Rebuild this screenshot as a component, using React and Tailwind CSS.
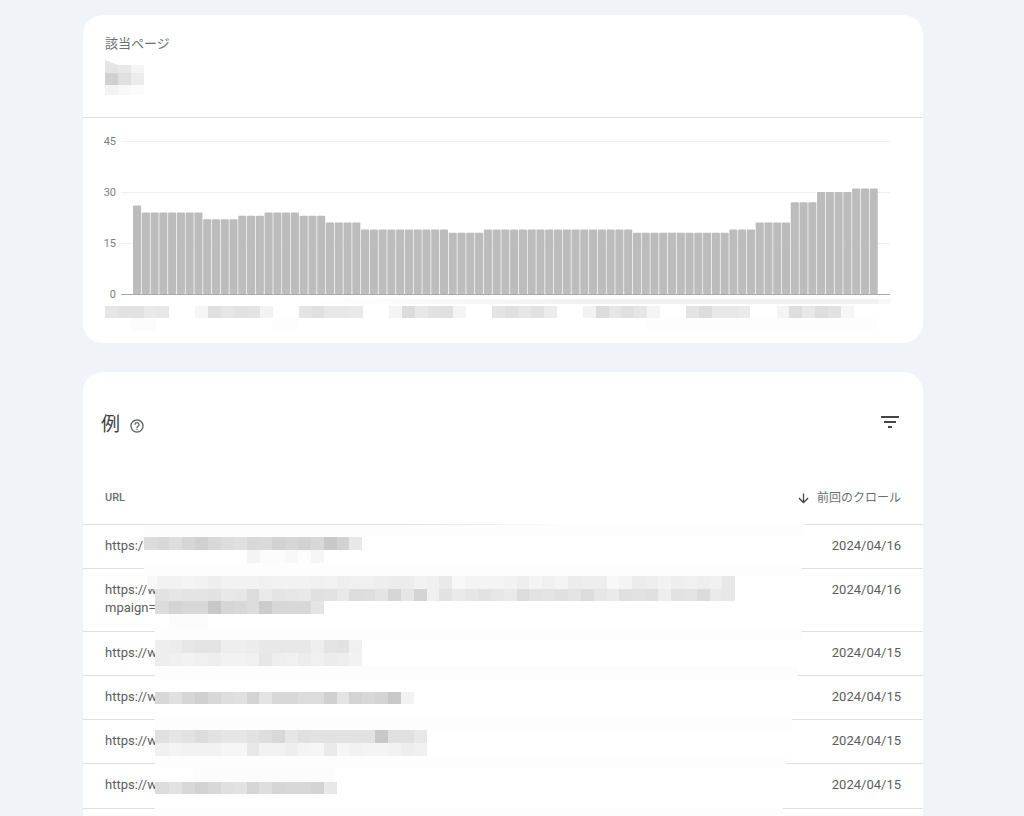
const FONT = "font-['Roboto','Noto_Sans_CJK_JP',sans-serif]";
const CELL = 12.87;

const runs = [[26,1],[24,7],[22,4],[23,3],[24,4],[23,3],[21,4],[19,10],[18,4],[19,17],[18,11],[19,3],[21,4],[27,3],[30,4],[31,3]];
const bars = runs.flatMap(([v, n]) => Array(n).fill(v));

/* One strip of the pixelated redaction: "e2" is a cell, "e2*3" a cell three wide, "--" a gap. */
function Strip({ cells = "", h = CELL }) {
  const list = cells ? cells.split(" ") : [];
  return (
    <div className="flex shrink-0" style={{ height: h }}>
      {list.map((token, i) => {
        const [c, n = "1"] = token.split("*");
        return (
          <div
            key={i}
            className="h-full shrink-0"
            style={{ width: CELL * Number(n), background: c === "--" ? "transparent" : `#${c}${c}${c}` }}
          />
        );
      })}
    </div>
  );
}

const TABLE_MASK = [
  ["fd*51.3", 12.2],
  ["dc d8 de d6 d0 d8 dd e0 d8 da d2 d6 d2 d8 c8 d2 e8"],
  ["--*8 f4 fc fc f8 fc f6"],
  ["fd*51.1"],
  ["--*0.256 f8*0.744 f2 f2 f4 f2 ee f2 f2 f2 f0 f2 f2 f2 f0 f2 ee f0 f0 ee ec ec f2 f0 ea f8 f4 f4 f4 f2 ee f4 f0 f4 ec ee ee f8 f4 ec ee f2 ee f0 ee f0 e8"],
  ["--*0.876 e2*1.124 e6 e4 e4 e2 e8 e6 dc ea e4 e6 e8 e0 e2 e8 dc de e4 d6 e6 d4 f0 e2 ea e6 e2 e6 ea dc e2 e4 e0 e4 dc e6 ea e0 e2 e0 ee e2 e4 dc ea e8"],
  ["--*0.876 dc*1.124 d4 d8 d8 c8 d6 d8 dc cc d8 d8 d8 e4"],
  ["--*2 fc*3"],
  ["--*0.876 fd*50.2"],
  ["--*0.876 ee*1.124 ec e6 e4 e4 ee ee ec e8 e8 e8 e8 ee e4 e2 f0"],
  ["--*0.876 ee*1.124 f0 f2 f0 ee f2 f2 f0 e6 ee f0 ec f0 ec ee f2"],
  ["--*0.876 fd*49.96"],
  ["--*0.876 ff*1"],
  ["--*0.876 d8*1.124 e0 d6 d0 d8 de e0 d4 e4 d8 d8 dc dc d0 e4 d4 d8 d4 c8 f2"],
  [""],
  ["--*0.876 fd*49.5"],
  ["--*0.876 e0*1.124 e6 e2 dc e2 e6 e6 e2 de d8 e6 e0 e2 e2 e2 e2 e2 c8 e0 e0 e8"],
  ["--*0.876 f0*1.124 f4 f2 f2 f2 f6 f6 e8 f2 f2 ee f4 f6 ea f6 f2 f4 f4 f2 ee f0"],
  ["--*0.876 fd*49.03"],
  ["--*0.876 ff*3 fc*11"],
  ["--*0.876 dc*1.124 e2 d8 d2 d8 e0 e2 d6 de d6 d8 d8 d4 e8"],
  [""],
  ["--*0.876 fd*48.8"],
];

function Chart() {
  const y0 = 176;
  const top = (v) => y0 - v * 3.4;
  return (
    <svg width="840" height="184" className="mb-[-3px] block" style={{ fontFamily: "Roboto, sans-serif" }}>
      {[45, 30, 15].map((v) => (
        <line key={v} x1="38" x2="807" y1={top(v) + 0.5} y2={top(v) + 0.5} stroke="#f0f0f0" />
      ))}
      {bars.map((v, i) => (
        <rect key={i} x={50 + i * 8.77} y={top(v)} width="8.1" height={v * 3.4} rx="1" fill="#bcbcbc" />
      ))}
      <line x1="38" x2="807" y1={y0 + 0.5} y2={y0 + 0.5} stroke="#a8a8a8" />
      {[45, 30, 15, 0].map((v) => (
        <text key={v} x="33" y={top(v) + 4} textAnchor="end" fontSize="11" fill="#808080">{v}</text>
      ))}
    </svg>
  );
}

function Row({ h, lines, date }) {
  return (
    <div className={`flex justify-between border-b border-[#e0e0e0] pl-[22px] pr-[22px] pt-[12px] text-[13px] leading-[18px] text-[#5a5d60] ${h}`}>
      <div className="whitespace-nowrap">
        {lines.map((l) => <div key={l}>{l}</div>)}
      </div>
      <div>{date}</div>
    </div>
  );
}

export default function App() {
  return (
    <div className={`relative h-[816px] overflow-hidden bg-[#f0f4f9] pl-[83px] pt-[15px] ${FONT}`}>
      <section className="h-[328px] w-[840px] rounded-[20px] bg-white">
        <div className="h-[103px] border-b border-[#e0e0e0] pl-[22px] pt-[20px]">
          <div className="text-[13px] leading-[18px] text-[#6b6f73]">該当ページ</div>
          <div className="mt-[7px] h-[5px] w-[13px] bg-[#e6e6e6] [clip-path:polygon(0_0,100%_100%,0_100%)]" />
          <Strip cells="e4 e8 f4" h={7.5} />
          <Strip cells="d0 e0 ec" />
          <Strip cells="f2 f8 fc" h={10} />
        </div>
        <Chart />
        <div className="ml-[217px] flex h-[5px]">
          <div className="w-[578px] bg-gradient-to-r from-white via-[#f1f1f1] to-[#f1f1f1]" />
          <div className="w-[13px] bg-[#f8f8f8]" />
        </div>
        <div className="ml-[22px] mt-[2px]">
          <Strip cells="e6 e2 e2 ea e8 --*2.03 f6 e0 e6 e2 e4 f2 --*2.03 e4 e0 e8 e8 ea --*2.03 f4 dc e8 e2 e0 f4 --*2.03 e4 e0 e6 e2 ec --*2.03 f2 dc e6 e0 e6 f4 --*2.03 e4 dc e8 e8 ea --*2.03 f4 de e8 de e2 f6" h={12} />
          <Strip cells="--*2 fc*2 --*9 fd*2 --*27 fd*18" />
        </div>
      </section>

      <section className="mt-[29px] h-[600px] w-[840px] rounded-t-[20px] bg-white">
        <div className="flex h-[104px] items-start justify-between pl-[18px] pr-[21px] pt-[38px]">
          <div className="flex items-start gap-[9px]">
            <span className="text-[19px] leading-[30px] text-[#3c4043]">例</span>
            <svg width="16" height="16" viewBox="0 0 24 24" fill="#5f6368" className="mt-[8px]">
              <path d="M11 18h2v-2h-2v2zm1-16C6.48 2 2 6.48 2 12s4.48 10 10 10 10-4.48 10-10S17.52 2 12 2zm0 18c-4.41 0-8-3.59-8-8s3.59-8 8-8 8 3.59 8 8-3.59 8-8 8zm0-14c-2.21 0-4 1.79-4 4h2c0-1.1.9-2 2-2s2 .9 2 2c0 2-3 1.75-3 5h2c0-2.25 3-2.5 3-5 0-2.21-1.79-4-4-4z" />
            </svg>
          </div>
          <svg width="24" height="24" viewBox="0 0 24 24" fill="#444746">
            <path d="M10 18h4v-2h-4v2zM3 6v2h18V6H3zm3 7h12v-2H6v2z" />
          </svg>
        </div>
        <div className="flex h-[49px] items-start justify-between border-b border-[#e0e0e0] pl-[22px] pr-[22px] pt-[13px] text-[#6b6f73]">
          <span className="text-[11px] font-medium leading-[18px]">URL</span>
          <span className="flex items-center gap-[6px] text-[12px] leading-[18px]">
            <svg width="15" height="15" viewBox="0 0 24 24" fill="#3c4043">
              <path d="M20 12l-1.41-1.41L13 16.17V4h-2v12.17l-5.58-5.59L4 12l8 8 8-8z" />
            </svg>
            前回のクロール
          </span>
        </div>
        <Row h="h-[44px]" lines={["https:/"]} date="2024/04/16" />
        <Row h="h-[63px]" lines={["https://w", "mpaign="]} date="2024/04/16" />
        <Row h="h-[44px]" lines={["https://w"]} date="2024/04/15" />
        <Row h="h-[44px]" lines={["https://w"]} date="2024/04/15" />
        <Row h="h-[44px]" lines={["https://w"]} date="2024/04/15" />
        <Row h="h-[45px]" lines={["https://w"]} date="2024/04/15" />
      </section>

      {/* pixelated redaction lying over the table */}
      <div className="absolute left-[400px] top-[524px] h-[1px] w-[405px] bg-gradient-to-r from-transparent via-[#fdfdfd] via-40% to-[#fdfdfd]" />
      <div className="absolute left-[143.7px] top-[525px] flex flex-col">
        {TABLE_MASK.map(([cells, h], i) => (
          <Strip key={i} cells={cells} h={h} />
        ))}
      </div>
    </div>
  );
}
